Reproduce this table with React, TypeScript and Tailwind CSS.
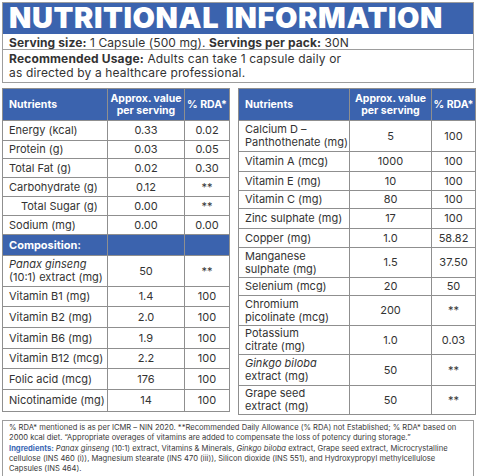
import * as React from "react";

type Row = {
  name: React.ReactNode;
  value: string;
  rda: string;
  h: string;
  indent?: boolean;
};

const leftTop: Row[] = [
  { name: "Energy (kcal)", value: "0.33", rda: "0.02", h: "h-[20px]" },
  { name: "Protein (g)", value: "0.03", rda: "0.05", h: "h-[18px]" },
  { name: "Total Fat (g)", value: "0.02", rda: "0.30", h: "h-[19px]" },
  { name: "Carbohydrate (g)", value: "0.12", rda: "**", h: "h-[19px]" },
  { name: "Total Sugar (g)", value: "0.00", rda: "**", h: "h-[19px]", indent: true },
  { name: "Sodium (mg)", value: "0.00", rda: "0.00", h: "h-[19px]" },
];

const leftBottom: Row[] = [
  {
    name: (
      <>
        <i>Panax ginseng</i>
        <br />
        (10:1) extract (mg)
      </>
    ),
    value: "50",
    rda: "**",
    h: "h-[31px]",
  },
  { name: "Vitamin B1 (mg)", value: "1.4", rda: "100", h: "h-[20px]" },
  { name: "Vitamin B2 (mg)", value: "2.0", rda: "100", h: "h-[21px]" },
  { name: "Vitamin B6 (mg)", value: "1.9", rda: "100", h: "h-[21px]" },
  { name: "Vitamin B12 (mcg)", value: "2.2", rda: "100", h: "h-[20px]" },
  { name: "Folic acid (mcg)", value: "176", rda: "100", h: "h-[21px]" },
  { name: "Nicotinamide (mg)", value: "14", rda: "100", h: "h-[22px]" },
];

const right: Row[] = [
  {
    name: (
      <>
        Calcium D –<br />
        Panthothenate (mg)
      </>
    ),
    value: "5",
    rda: "100",
    h: "h-[31px]",
  },
  { name: "Vitamin A (mcg)", value: "1000", rda: "100", h: "h-[20px]" },
  { name: "Vitamin E (mg)", value: "10", rda: "100", h: "h-[19px]" },
  { name: "Vitamin C (mg)", value: "80", rda: "100", h: "h-[18px]" },
  { name: "Zinc sulphate (mg)", value: "17", rda: "100", h: "h-[20px]" },
  { name: "Copper (mg)", value: "1.0", rda: "58.82", h: "h-[19px]" },
  {
    name: (
      <>
        Manganese
        <br />
        sulphate (mg)
      </>
    ),
    value: "1.5",
    rda: "37.50",
    h: "h-[30px]",
  },
  { name: "Selenium (mcg)", value: "20", rda: "50", h: "h-[18px]" },
  {
    name: (
      <>
        Chromium
        <br />
        picolinate (mcg)
      </>
    ),
    value: "200",
    rda: "**",
    h: "h-[30px]",
  },
  {
    name: (
      <>
        Potassium
        <br />
        citrate (mg)
      </>
    ),
    value: "1.0",
    rda: "0.03",
    h: "h-[29px]",
  },
  {
    name: (
      <>
        <i>Ginkgo biloba</i>
        <br />
        extract (mg)
      </>
    ),
    value: "50",
    rda: "**",
    h: "h-[31px]",
  },
  {
    name: (
      <>
        Grape seed
        <br />
        extract (mg)
      </>
    ),
    value: "50",
    rda: "**",
    h: "h-[29px]",
  },
];

const cell = "border border-[#8f8f8f]";

function HeadRow() {
  return (
    <tr className="h-[32px] bg-[#3b63ae] text-white font-bold text-[10.5px] leading-[12px]">
      <td className={`${cell} pl-[6px] text-left`}>Nutrients</td>
      <td className={`${cell} text-center`}>
        Approx. value
        <br />
        per serving
      </td>
      <td className={`${cell} text-center`}>% RDA*</td>
    </tr>
  );
}

function BodyRow({ row }: { row: Row }) {
  return (
    <tr className={`${row.h} text-[11px] leading-[13px]`}>
      <td className={`${cell} whitespace-nowrap text-left ${row.indent ? "pl-[18px]" : "pl-[6px]"}`}>{row.name}</td>
      <td className={`${cell} text-center`}>{row.value}</td>
      <td className={`${cell} text-center`}>{row.rda}</td>
    </tr>
  );
}

export default function App() {
  return (
    <div className="w-[480px] h-[476px] overflow-hidden bg-white pl-[2px] pt-[2px] font-['Inter',sans-serif] text-[#333333]">
      <div className="w-[472px] border border-[#9d9d9d]">
        <div className="h-[31px] bg-[#3b63ae] pl-[6px] text-white text-[29px] font-black leading-[29px] tracking-[0.6px]">
          NUTRITIONAL INFORMATION
        </div>
        <div className="h-[16px] border-b border-[#9d9d9d] pl-[6px] text-[12px] leading-[17px] tracking-[0.1px]">
          <b>Serving size:</b> 1 Capsule (500 mg). <b>Servings per pack:</b> 30N
        </div>
        <div className="h-[32px] pl-[6px] pt-[2px] text-[12px] leading-[14px] tracking-[0.15px]">
          <b>Recommended Usage:</b> Adults can take 1 capsule daily or
          <br />
          as directed by a healthcare professional.
        </div>
      </div>

      <div className="mt-[5px] flex items-start gap-[8px]">
        <table className="w-[227px] table-fixed border-collapse">
          <colgroup>
            <col className="w-[105px]" />
            <col className="w-[77px]" />
            <col className="w-[45px]" />
          </colgroup>
          <tbody>
            <HeadRow />
            {leftTop.map((r, i) => (
              <BodyRow key={i} row={r} />
            ))}
            <tr className="h-[21px] bg-[#3b63ae] text-white font-bold text-[11px]">
              <td className={`${cell} pl-[6px] text-left`}>Composition:</td>
              <td className={cell}></td>
              <td className={cell}></td>
            </tr>
            {leftBottom.map((r, i) => (
              <BodyRow key={i} row={r} />
            ))}
          </tbody>
        </table>

        <table className="w-[237px] table-fixed border-collapse">
          <colgroup>
            <col className="w-[111px]" />
            <col className="w-[82px]" />
            <col className="w-[44px]" />
          </colgroup>
          <tbody>
            <HeadRow />
            {right.map((r, i) => (
              <BodyRow key={i} row={r} />
            ))}
          </tbody>
        </table>
      </div>

      <div className="mt-[5px] w-[472px] border border-[#9d9d9d] px-[6px] pt-[2px] pb-[3px] text-[7.6px] leading-[10px] text-[#3a3a3a] whitespace-nowrap">
        <div>
          % RDA* mentioned is as per ICMR – NIN 2020. **Recommended Daily Allowance (% RDA) not Established; % RDA* based on
        </div>
        <div>
          2000 kcal diet. “Appropriate overages of vitamins are added to compensate the loss of potency during storage.”
        </div>
        <div className="mt-[1px]">
          <b className="text-[#3b68b5]">Ingredients:</b> <i>Panax ginseng</i> (10:1) extract, Vitamins &amp; Minerals,{" "}
          <i>Ginkgo biloba</i> extract, Grape seed extract, Microcrystalline
        </div>
        <div>
          cellulose (INS 460 (i)), Magnesium stearate (INS 470 (iii)), Silicon dioxide (INS 551), and Hydroxypropyl
          methylcellulose
        </div>
        <div>Capsules (INS 464).</div>
      </div>
    </div>
  );
}
